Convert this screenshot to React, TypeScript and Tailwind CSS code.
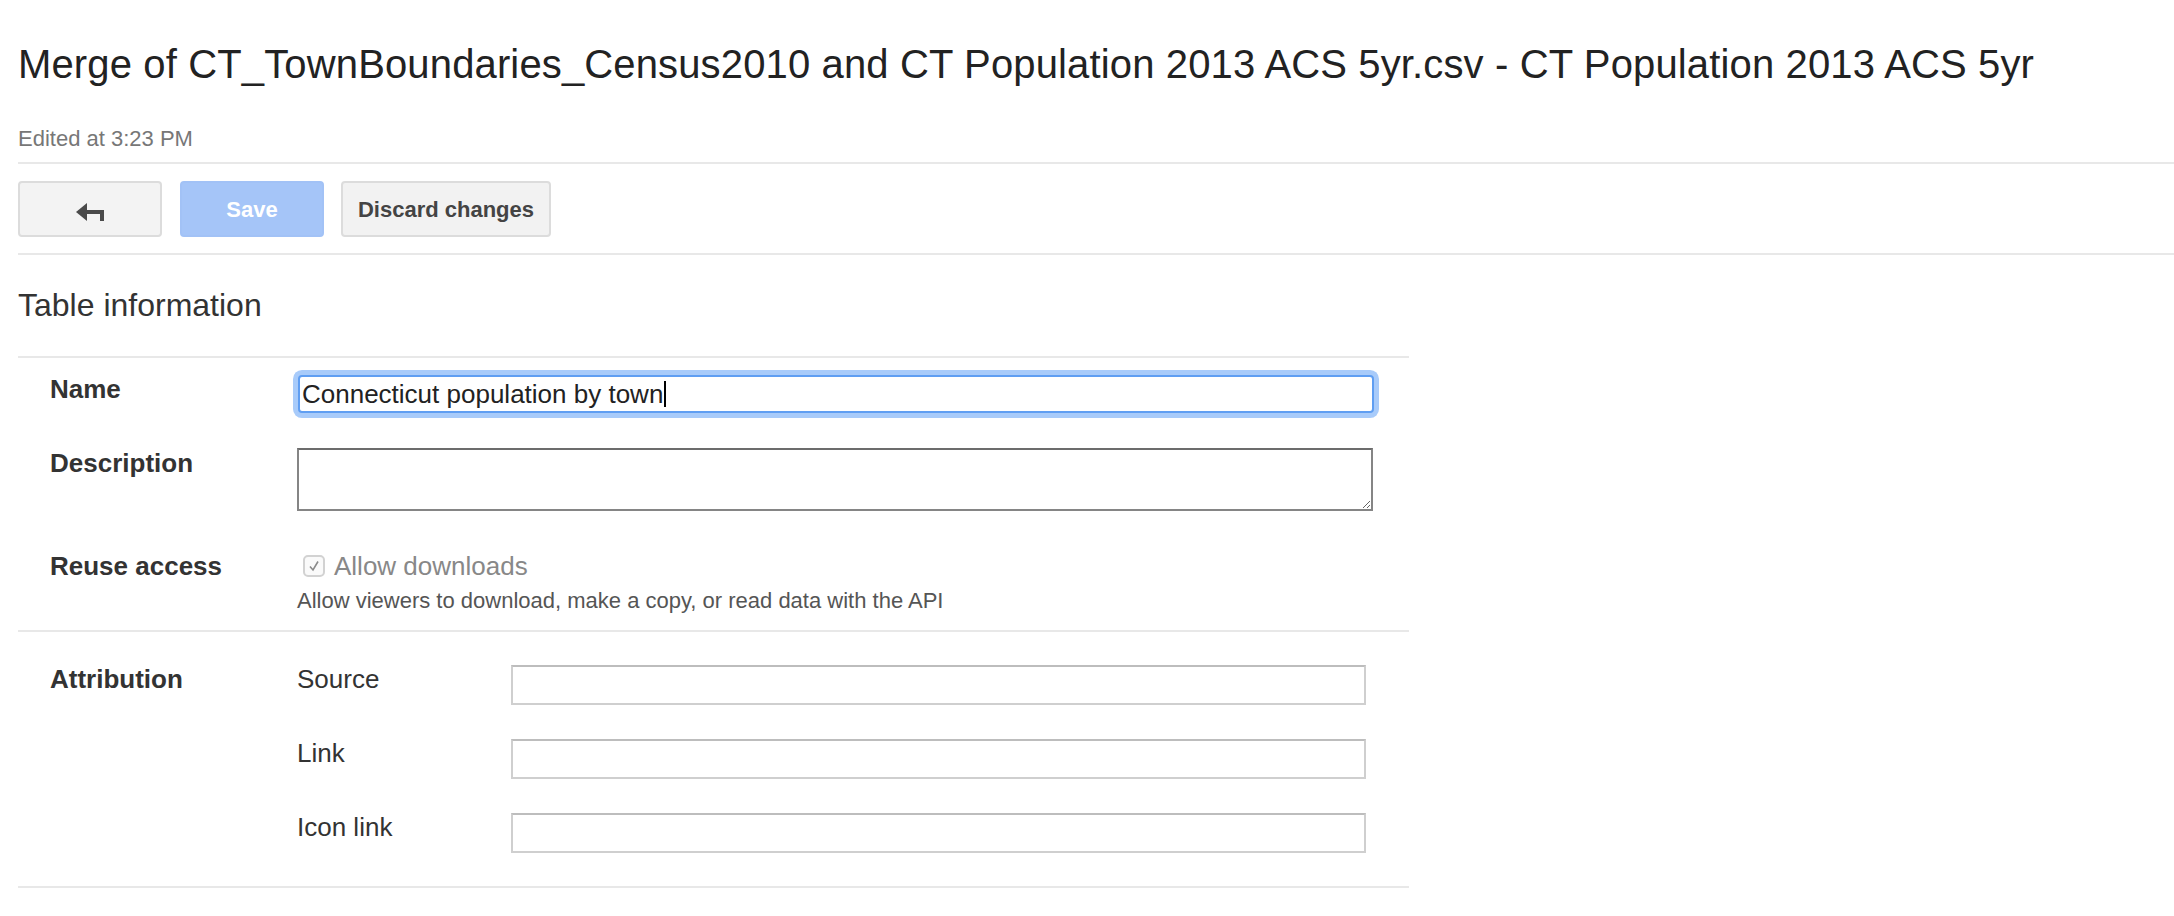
const sans = "font-['Liberation_Sans',Arial,Helvetica,sans-serif]";

function BackIcon() {
  return (
    <svg width="28" height="18" viewBox="0 0 28 18" className="mt-[6px]">
      <polygon points="0,9 11,0 11,18" fill="#4a4a4a" />
      <rect x="10" y="7" width="18" height="4" fill="#4a4a4a" />
      <rect x="24" y="7" width="4" height="11" fill="#4a4a4a" />
    </svg>
  );
}

function Toolbar() {
  return (
    <div className="mt-[17px] flex h-[56px] items-stretch">
      <button className="flex w-[144px] items-center justify-center rounded-[4px] border-2 border-[#dcdcdc] bg-[#f3f3f3]">
        <BackIcon />
      </button>
      <button className="ml-[18px] w-[144px] rounded-[4px] border-2 border-[#a2c2f6] bg-[#a5c5f8] text-[22px] font-bold text-white">
        Save
      </button>
      <button className="ml-[17px] w-[210px] rounded-[4px] border-2 border-[#dcdcdc] bg-[#f2f2f2] text-[22px] font-bold text-[#444]">
        Discard changes
      </button>
    </div>
  );
}

function Checkbox() {
  return (
    <span className="ml-[6px] flex h-[22px] w-[22px] items-center justify-center rounded-[5px] border-2 border-[#d2d2d2] bg-[#fafafa]">
      <svg width="14" height="14" viewBox="0 0 14 14">
        <path d="M3 7.5 L6 11 L11 2.5" fill="none" stroke="#8a8a8a" strokeWidth="1.6" />
      </svg>
    </span>
  );
}

function AttrRow({ label, first }: { label: string; first?: boolean }) {
  return (
    <div className={first ? "flex items-start" : "mt-[33px] flex items-start"}>
      <div className="w-[214px] text-[26px] leading-[30px] text-[#333]">{label}</div>
      <div className="mt-[1px] h-[40px] w-[855px] border-2 border-[#cfcfcf] border-t-[#bdbdbd] bg-white" />
    </div>
  );
}

export default function App() {
  return (
    <div className={`min-h-[916px] bg-white pl-[18px] ${sans}`}>
      <h1 className="whitespace-nowrap pt-[40px] text-[40px] font-normal leading-[48px] tracking-[0.14px] text-[#222]">
        Merge of CT_TownBoundaries_Census2010 and CT Population 2013 ACS 5yr.csv - CT Population 2013 ACS 5yr
      </h1>
      <div className="mt-[38px] text-[22px] leading-[26px] text-[#777]">Edited at 3:23 PM</div>
      <div className="mt-[10px] h-[2px] bg-[#e8e8e8]" />
      <Toolbar />
      <div className="mt-[16px] h-[2px] bg-[#e8e8e8]" />
      <h2 className="mt-[32px] text-[32px] leading-[36px] text-[#333]">Table information</h2>

      <div className="mt-[33px] w-[1391px]">
        <div className="h-[2px] bg-[#e8e8e8]" />
        <div className="pl-[32px] pt-[16px]">
          <div className="flex items-start">
            <div className="w-[247px] text-[26px] font-bold leading-[30px] text-[#333]">Name</div>
            <div className="ml-[1px] mt-[1px] flex h-[38px] w-[1076px] items-center rounded-[4px] border-2 border-[#5f9ef2] bg-white px-[2px] shadow-[0_0_0_5px_#a8cbfa]">
              <span className="text-[26px] leading-[30px] text-[#222]">Connecticut population by town</span>
              <span className="ml-[1px] h-[26px] w-[2px] bg-black" />
            </div>
          </div>

          <div className="mt-[35px] flex items-start">
            <div className="w-[247px] text-[26px] font-bold leading-[30px] text-[#333]">Description</div>
            <textarea className="block h-[63px] w-[1076px] border-2 border-[#858585] border-t-[#6c6c6c] bg-white outline-none" />
          </div>

          <div className="mt-[40px] flex items-start">
            <div className="w-[247px] text-[26px] font-bold leading-[30px] text-[#333]">Reuse access</div>
            <div>
              <div className="flex h-[30px] items-center">
                <Checkbox />
                <span className="ml-[9px] text-[26px] leading-[30px] text-[#888]">Allow downloads</span>
              </div>
              <div className="mt-[7px] text-[22px] leading-[26px] text-[#555]">
                Allow viewers to download, make a copy, or read data with the API
              </div>
            </div>
          </div>
        </div>

        <div className="mt-[16px] h-[2px] bg-[#e8e8e8]" />

        <div className="flex items-start pl-[32px] pt-[32px]">
          <div className="w-[247px] text-[26px] font-bold leading-[30px] text-[#333]">Attribution</div>
          <div>
            <AttrRow label="Source" first />
            <AttrRow label="Link" />
            <AttrRow label="Icon link" />
          </div>
        </div>

        <div className="mt-[33px] h-[2px] bg-[#e8e8e8]" />
      </div>
    </div>
  );
}
